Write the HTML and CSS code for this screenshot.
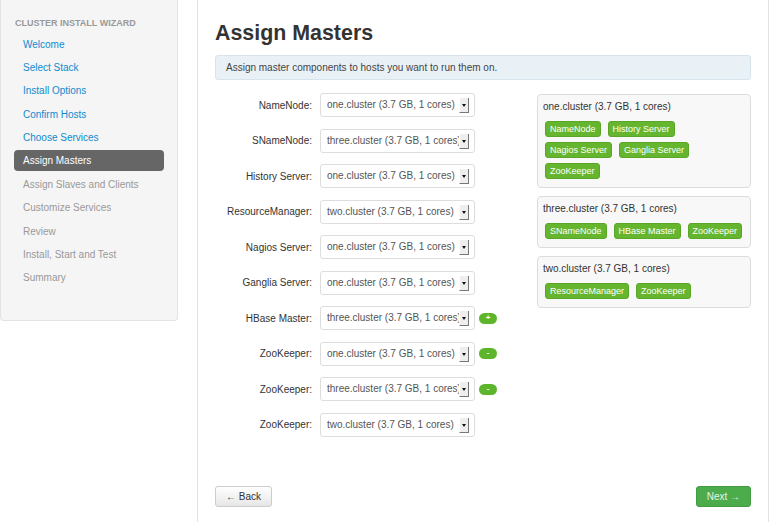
FILE: index.html
```html
<!DOCTYPE html>
<html lang="en">
<head>
  <meta charset="UTF-8">
  <meta name="viewport" content="width=device-width, initial-scale=1.0">
  <title>Assign Masters</title>
  <link rel="stylesheet" href="styles.css">
</head>
<body>
  <div class="wrapper">
    <div class="sidebar">
      <div class="nav-header">Cluster Install Wizard</div>
      <ul class="nav">
        <li class="done">Welcome</li>
        <li class="done">Select Stack</li>
        <li class="done">Install Options</li>
        <li class="done">Confirm Hosts</li>
        <li class="done">Choose Services</li>
        <li class="active">Assign Masters</li>
        <li>Assign Slaves and Clients</li>
        <li>Customize Services</li>
        <li>Review</li>
        <li>Install, Start and Test</li>
        <li>Summary</li>
      </ul>
    </div>

    <div class="main">
      <h1>Assign Masters</h1>
      <div class="alert">Assign master components to hosts you want to run them on.</div>

      <div class="assign">
        <div class="masters">
          <div class="row">
            <label>NameNode:</label>
            <div class="select"><span class="value">one.cluster (3.7 GB, 1 cores)</span><span class="arrow"></span></div>
          </div>
          <div class="row">
            <label>SNameNode:</label>
            <div class="select"><span class="value">three.cluster (3.7 GB, 1 cores)</span><span class="arrow"></span></div>
          </div>
          <div class="row">
            <label>History Server:</label>
            <div class="select"><span class="value">one.cluster (3.7 GB, 1 cores)</span><span class="arrow"></span></div>
          </div>
          <div class="row">
            <label>ResourceManager:</label>
            <div class="select"><span class="value">two.cluster (3.7 GB, 1 cores)</span><span class="arrow"></span></div>
          </div>
          <div class="row">
            <label>Nagios Server:</label>
            <div class="select"><span class="value">one.cluster (3.7 GB, 1 cores)</span><span class="arrow"></span></div>
          </div>
          <div class="row">
            <label>Ganglia Server:</label>
            <div class="select"><span class="value">one.cluster (3.7 GB, 1 cores)</span><span class="arrow"></span></div>
          </div>
          <div class="row">
            <label>HBase Master:</label>
            <div class="select"><span class="value">three.cluster (3.7 GB, 1 cores)</span><span class="arrow"></span></div>
            <span class="pill">+</span>
          </div>
          <div class="row">
            <label>ZooKeeper:</label>
            <div class="select"><span class="value">one.cluster (3.7 GB, 1 cores)</span><span class="arrow"></span></div>
            <span class="pill">-</span>
          </div>
          <div class="row">
            <label>ZooKeeper:</label>
            <div class="select"><span class="value">three.cluster (3.7 GB, 1 cores)</span><span class="arrow"></span></div>
            <span class="pill">-</span>
          </div>
          <div class="row">
            <label>ZooKeeper:</label>
            <div class="select"><span class="value">two.cluster (3.7 GB, 1 cores)</span><span class="arrow"></span></div>
          </div>
        </div>

        <div class="hosts">
          <div class="host">
            <div class="host-name">one.cluster (3.7 GB, 1 cores)</div>
            <div class="badges">
              <span class="badge">NameNode</span>
              <span class="badge">History Server</span>
              <span class="badge">Nagios Server</span>
              <span class="badge">Ganglia Server</span>
              <span class="badge">ZooKeeper</span>
            </div>
          </div>
          <div class="host">
            <div class="host-name">three.cluster (3.7 GB, 1 cores)</div>
            <div class="badges">
              <span class="badge">SNameNode</span>
              <span class="badge">HBase Master</span>
              <span class="badge">ZooKeeper</span>
            </div>
          </div>
          <div class="host">
            <div class="host-name">two.cluster (3.7 GB, 1 cores)</div>
            <div class="badges">
              <span class="badge">ResourceManager</span>
              <span class="badge">ZooKeeper</span>
            </div>
          </div>
        </div>
      </div>

      <div class="footer">
        <button class="btn">&larr; Back</button>
        <button class="btn btn-success">Next &rarr;</button>
      </div>
    </div>
  </div>
</body>
</html>
```

FILE: styles.css
```css
body {
  margin: 0;
  font-family: "Liberation Sans", Arial, sans-serif;
  font-size: 10px;
  color: #333;
  background-color: white;
}

.wrapper {
  display: flex;
  align-items: flex-start;
}

.sidebar {
  width: 150px;
  padding: 17px 13px 29px 13px;
  background-color: #f5f5f5;
  border: 1px solid #e3e3e3;
  border-top: none;
  border-radius: 0 0 4px 4px;
}

.nav-header {
  font-size: 9px;
  font-weight: bold;
  color: #999;
  text-transform: uppercase;
  line-height: 12px;
  margin-left: 1px;
  margin-bottom: 4.5px;
}

.nav {
  list-style: none;
  margin: 0;
  padding: 0;
}

.nav li {
  height: 21px;
  line-height: 21px;
  padding-left: 9px;
  margin-bottom: 2.4px;
  color: #999;
  border-radius: 4px;
}

.nav li.done {
  color: #0f8ad0;
}

.nav li.active {
  background-color: #666;
  color: white;
}

.main {
  flex: 1;
  margin-left: 19px;
  min-height: 540px;
  padding: 0 17px;
  border: 1px solid #e3e3e3;
  border-top: none;
}

h1 {
  margin: 0;
  padding-top: 20px;
  font-size: 21.4px;
  line-height: 26px;
  color: #333;
}

.alert {
  margin-top: 9px;
  height: 23px;
  line-height: 23px;
  padding: 0 10px;
  background-color: #e9f1f7;
  border: 1px solid #d6e4ee;
  border-radius: 3px;
  color: #444;
}

.assign {
  display: flex;
  justify-content: space-between;
  margin-top: 13px;
}

.masters {
  display: flex;
  flex-direction: column;
  gap: 11.5px;
}

.row {
  display: flex;
  align-items: center;
  height: 24px;
}

.row label {
  width: 97px;
  text-align: right;
  margin-right: 8px;
  color: #333;
}

.select {
  position: relative;
  width: 153px;
  height: 22px;
  line-height: 22px;
  border: 1px solid #ddd;
  border-radius: 3px;
  background-color: white;
  overflow: hidden;
}

.select .value {
  display: block;
  width: 134px;
  padding-left: 6px;
  white-space: nowrap;
  overflow: hidden;
  color: #555;
}

.select .arrow {
  position: absolute;
  right: 5px;
  top: 4px;
  width: 8px;
  height: 14px;
  background-color: #eee;
  border-right: 1px solid #777;
  border-bottom: 1px solid #777;
  border-left: 1px solid #fff;
}

.select .arrow::after {
  content: "";
  position: absolute;
  left: 2px;
  top: 6px;
  border-left: 2px solid transparent;
  border-right: 2px solid transparent;
  border-top: 3px solid #111;
}

.pill {
  width: 18px;
  height: 11px;
  line-height: 10px;
  margin-left: 4px;
  border-radius: 6px;
  background-color: #5db52c;
  color: white;
  font-size: 8px;
  font-weight: bold;
  text-align: center;
}

.hosts {
  width: 214px;
  margin-top: 1px;
  display: flex;
  flex-direction: column;
  gap: 8px;
}

.host {
  padding: 6px 5px 8px 5px;
  background-color: #f8f8f8;
  border: 1px solid #dcdcdc;
  border-radius: 4px;
}

.host-name {
  line-height: 12px;
  margin-bottom: 8px;
  color: #333;
}

.badges {
  display: flex;
  flex-wrap: wrap;
  gap: 5px 7px;
  padding-left: 2px;
}

.badge {
  height: 14px;
  line-height: 14px;
  padding: 0 4px;
  font-size: 9px;
  color: white;
  background-color: #66b52f;
  border: 1px solid #5aa626;
  border-radius: 3px;
}

.footer {
  display: flex;
  justify-content: space-between;
  margin-top: 49px;
}

.btn {
  height: 21px;
  padding: 0 10px;
  font-family: "Liberation Sans", Arial, sans-serif;
  font-size: 10px;
  color: #333;
  background: linear-gradient(#fff, #e6e6e6);
  border: 1px solid #ccc;
  border-radius: 3px;
}

.btn-success {
  color: #e6f3e6;
  background: #4cac4c;
  border-color: #429a42;
  padding: 0 10px;
}
```
